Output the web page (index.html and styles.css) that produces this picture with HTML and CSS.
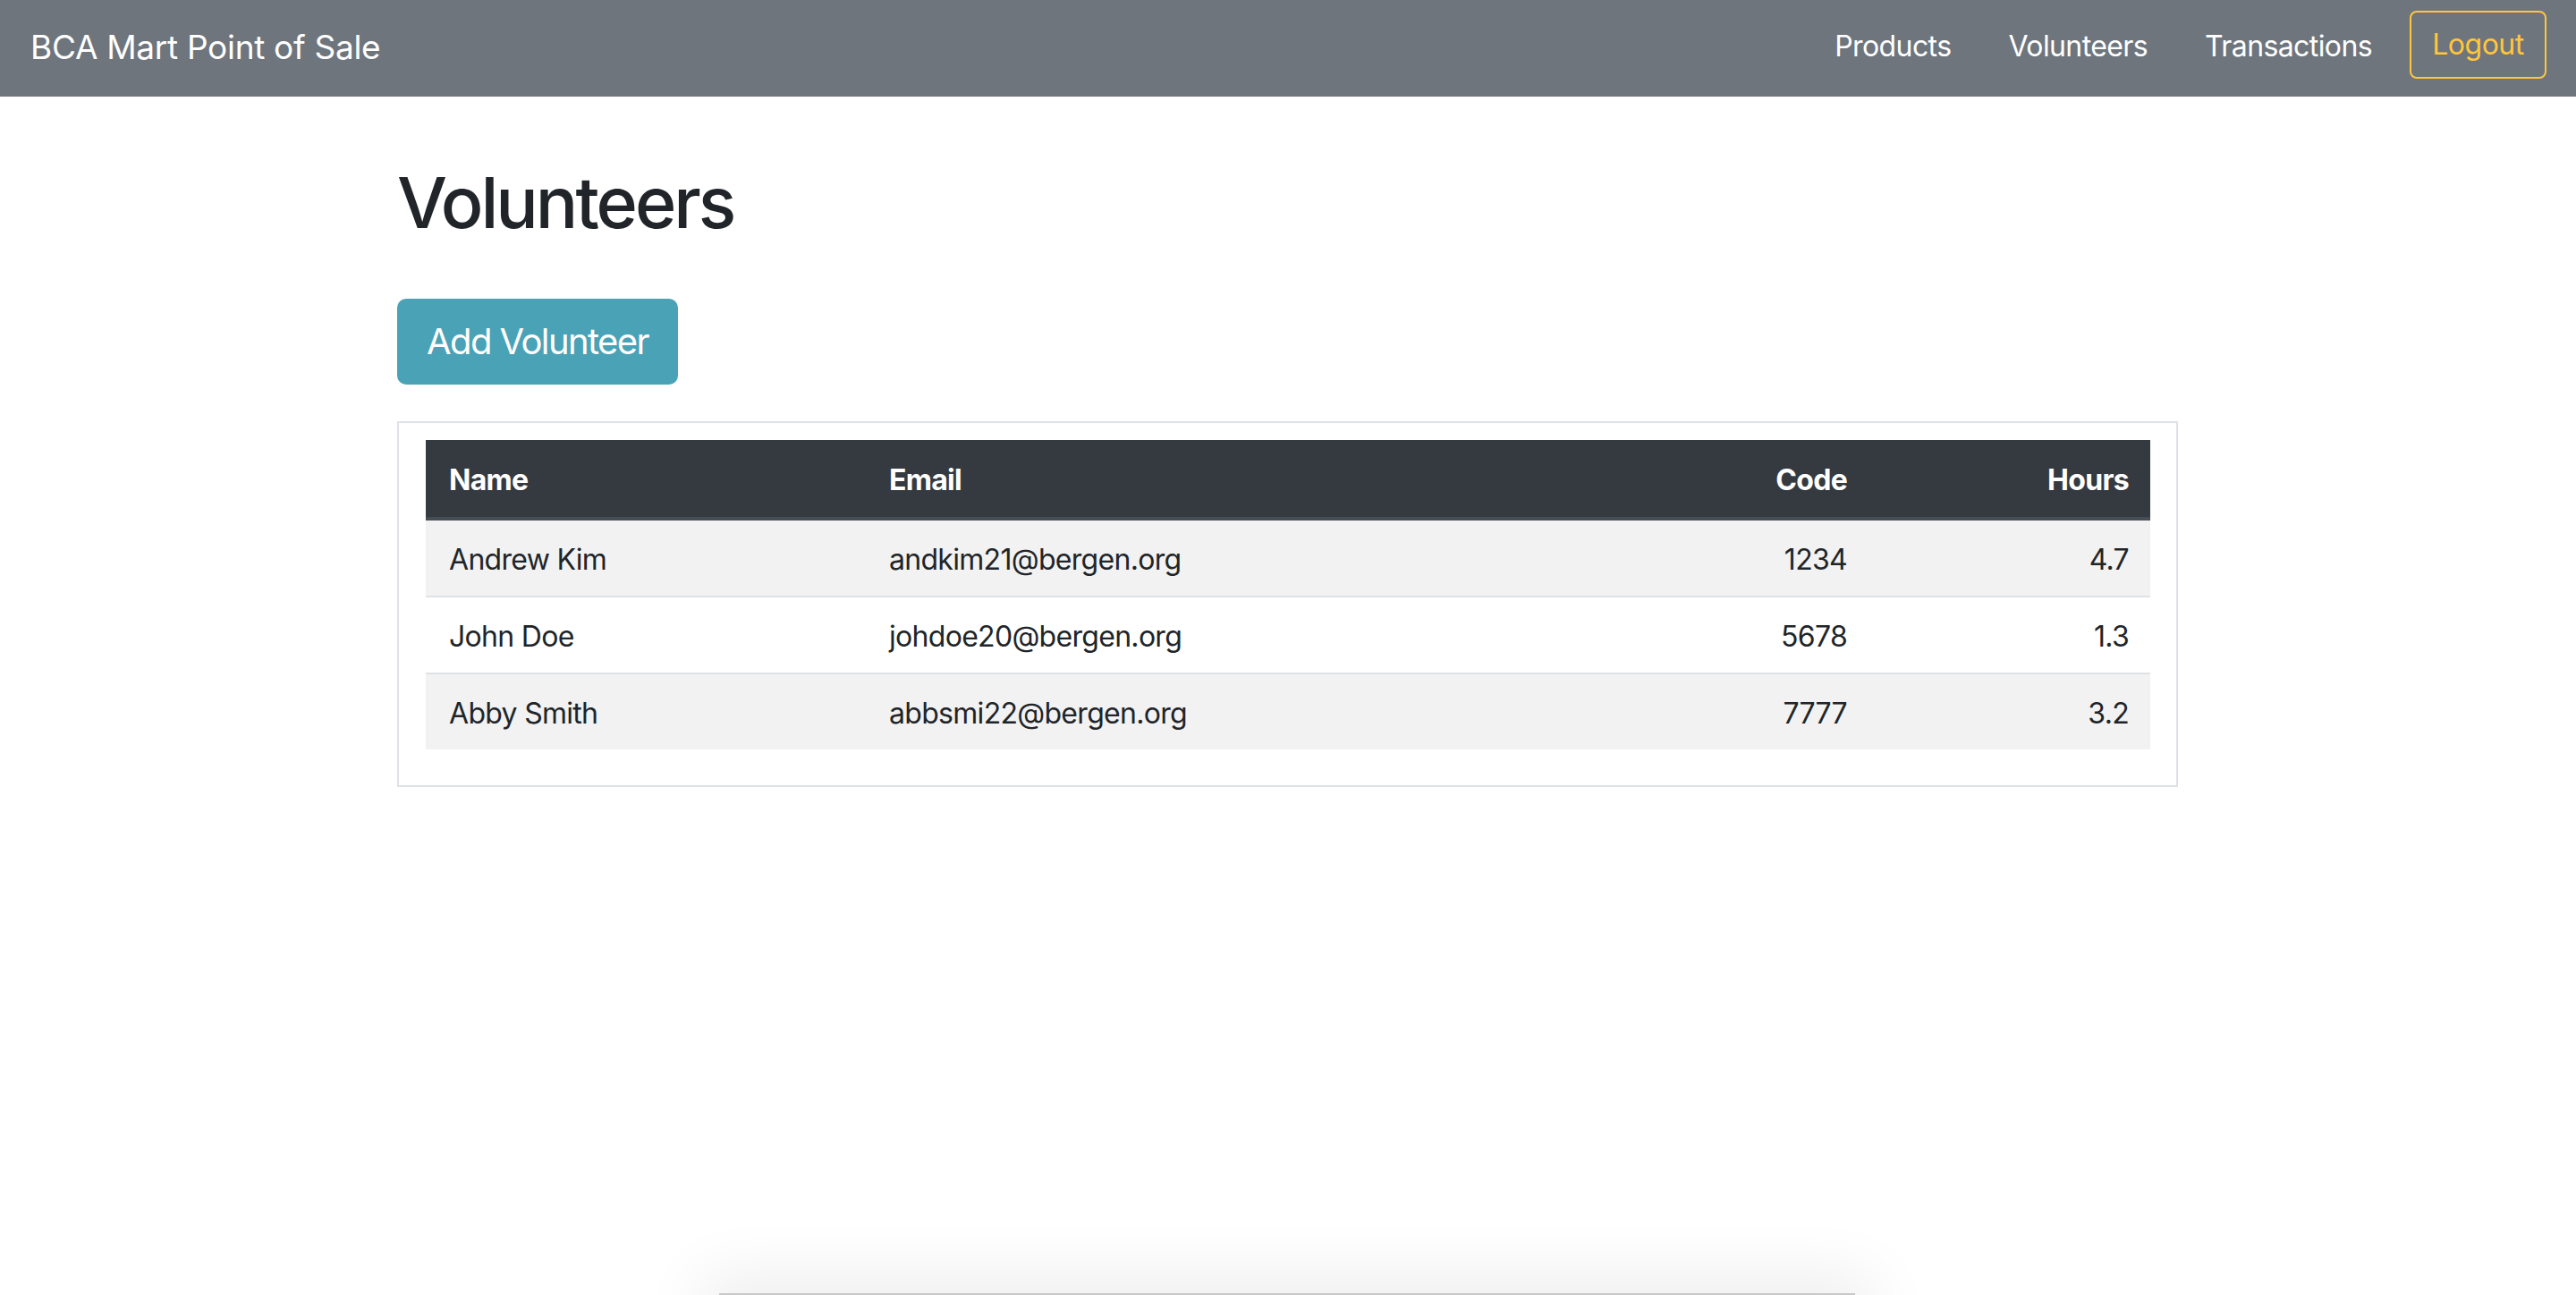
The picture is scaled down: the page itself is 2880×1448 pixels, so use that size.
FILE: index.html
```html
<!DOCTYPE html>
<html lang="en">
<head>
<meta charset="utf-8">
<title>BCA Mart Point of Sale</title>
<link rel="stylesheet" href="styles.css">
</head>
<body>
<nav class="navbar">
  <a class="brand" href="#">BCA Mart Point of Sale</a>
  <div class="nav-links">
    <a class="nav-link" href="#">Products</a>
    <a class="nav-link" href="#">Volunteers</a>
    <a class="nav-link" href="#">Transactions</a>
  </div>
  <button class="btn-logout" type="button">Logout</button>
</nav>
<main class="content">
  <h1 class="title">Volunteers</h1>
  <button class="btn-add" type="button">Add Volunteer</button>
  <div class="card">
    <table class="table">
      <colgroup>
        <col class="c-name"><col class="c-email"><col class="c-code"><col class="c-hours">
      </colgroup>
      <thead>
        <tr><th>Name</th><th>Email</th><th class="num">Code</th><th class="num">Hours</th></tr>
      </thead>
      <tbody>
        <tr class="odd"><td>Andrew Kim</td><td>andkim21@bergen.org</td><td class="num">1234</td><td class="num">4.7</td></tr>
        <tr><td>John Doe</td><td>johdoe20@bergen.org</td><td class="num">5678</td><td class="num">1.3</td></tr>
        <tr class="odd"><td>Abby Smith</td><td>abbsmi22@bergen.org</td><td class="num">7777</td><td class="num">3.2</td></tr>
      </tbody>
    </table>
  </div>
</main>
<div class="bottom-sheet"></div>
</body>
</html>
```

FILE: styles.css
```css
html, body {
  margin: 0;
  padding: 0;
  background: #ffffff;
}
body {
  font-family: Inter, "Noto Sans", "Liberation Sans", sans-serif;
  font-size: 32px;
  line-height: 48px;
  letter-spacing: -0.7px;
  color: #212529;
  height: 1448px;
  overflow: hidden;
}
.navbar {
  height: 108px;
  box-sizing: border-box;
  background: #6e757d;
  display: flex;
  align-items: center;
  padding: 14px 33px 18px 34px;
}
.brand {
  font-size: 37px;
  line-height: 56px;
  letter-spacing: -0.3px;
  color: #ffffff;
  text-decoration: none;
  margin-top: 2px;
}
.nav-links {
  margin-left: auto;
  display: flex;
  gap: 64px;
  margin-right: 42px;
}
.nav-link {
  color: #ffffff;
  text-decoration: none;
  font-size: 32px;
  line-height: 48px;
  letter-spacing: -0.6px;
}
.btn-logout {
  font-family: inherit;
  font-size: 32px;
  line-height: 48px;
  letter-spacing: -0.5px;
  color: #ffc63a;
  background: transparent;
  border: 2px solid #ffc63a;
  border-radius: 8px;
  width: 153px;
  height: 76px;
  padding: 0;
  margin-top: -4px;
}
.content {
  width: 1991px;
  margin: 0 0 0 444px;
  padding-top: 70px;
}
.title {
  font-size: 79px;
  line-height: 96px;
  font-weight: 500;
  margin: 0 0 60px 0;
  letter-spacing: -3px;
}
.btn-add {
  display: block;
  font-family: inherit;
  font-size: 40px;
  line-height: 60px;
  letter-spacing: -1.6px;
  color: #ffffff;
  background: #4aa2b6;
  border: 0;
  border-radius: 10px;
  height: 96px;
  width: 314px;
  padding: 0;
  margin: 0 0 41px 0;
}
.card {
  border: 2px solid #dee2e6;
  padding: 19px 29px 40px 30px;
}
.table {
  width: 100%;
  table-layout: fixed;
  border-collapse: separate;
  border-spacing: 0;
}
.c-name { width: 492px; }
.c-email { width: 800px; }
.c-code { width: 321px; }
.c-hours { width: 315px; }
.table th {
  background: #343a40;
  color: #ffffff;
  font-weight: 700;
  text-align: left;
  padding: 21px 24px 17px 26px;
  border-bottom: 4px solid #454d55;
}
.table td {
  padding: 20px 24px 16px 26px;
  border-top: 2px solid #dee2e6;
}
.table tbody tr:first-child td {
  border-top: 0;
}
.table tr.odd td {
  background: #f2f2f2;
}
.table .num {
  text-align: right;
}
.bottom-sheet {
  position: fixed;
  left: 804px;
  width: 1270px;
  bottom: -40px;
  height: 42px;
  background: #c8c8c8;
  box-shadow: 0 0 70px 20px rgba(0, 0, 0, 0.07);
}
```
